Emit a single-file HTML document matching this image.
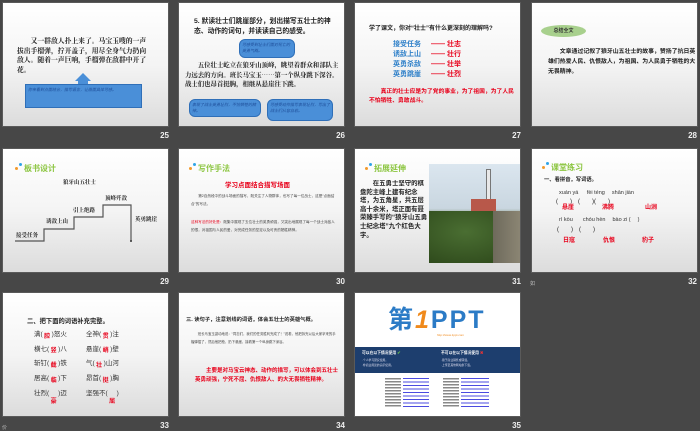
<!DOCTYPE html>
<html><head><meta charset="utf-8"><style>
*{margin:0;padding:0;box-sizing:border-box}
body{width:700px;height:431px;background:#474747;position:relative;overflow:hidden;font-family:"Liberation Sans","Noto Sans CJK SC",sans-serif}
.s{position:absolute;width:167px;height:125px;background:linear-gradient(#fff 0%,#f4f4f4 50%,#dcdcdc 100%);overflow:hidden;border:1px solid #5a5a5a}
.n{position:absolute;color:#eee;font-size:8px;font-weight:bold;text-align:right;width:30px}
.a{position:absolute;white-space:nowrap}
.w{white-space:normal}
.t{font-family:"Noto Serif CJK SC",serif;font-weight:bold;color:#222}
.b{position:absolute;background:#4a8fd8;border:1px solid #2f6fb8;border-radius:4px;color:#1f4f9a;font-size:4px;font-style:italic;padding:2px}
.r{color:#e8001a;font-weight:bold}
.h{color:#8bc53f;font-size:8px;font-weight:bold}
.dot{display:inline-block;width:3px;height:3px;border-radius:50%;background:#f39a2b;margin-right:1px;vertical-align:middle}
.dot2{display:inline-block;width:3px;height:3px;border-radius:50%;background:#2fa4e7;margin-right:2px;vertical-align:top}
.rc{display:inline-block;width:9px;text-align:center;color:#e8001a;font-weight:bold;font-size:6px;position:relative;top:1.5px}
.rl{display:inline-block;width:9px;text-align:center;color:#e8001a;font-weight:bold;font-size:6px;position:relative;top:8px}
</style></head><body>

<!-- 25 -->
<div class="s" style="left:2px;top:2px">
 <div class="a t w" style="left:14px;top:33px;font-size:6.8px;line-height:9.6px;width:132px">&emsp;&emsp;又一群敌人扑上来了。马宝玉嗖的一声拔出手榴弹，拧开盖子，用尽全身气力扔向敌人。随着一声巨响，手榴弹在敌群中开了花。</div>
 <div class="a" style="left:72px;top:70px;width:0;height:0;border-left:8px solid transparent;border-right:8px solid transparent;border-bottom:8px solid #4a8fd8"></div>
 <div class="a" style="left:75px;top:77px;width:10px;height:4px;background:#4a8fd8"></div>
 <div class="b" style="left:22px;top:81px;width:117px;height:24px;border-radius:0">你来看到点面结合，描写语言，让画面具体可感。</div>
</div>
<div class="n" style="left:139px;top:131px">25</div>

<!-- 26 -->
<div class="s" style="left:178px;top:2px">
 <div class="a t w" style="left:15px;top:14px;font-size:6.8px;line-height:10px;width:145px;font-family:'Liberation Sans','Noto Sans CJK SC',sans-serif">5. 默读壮士们跳崖部分，划出描写五壮士的神态、动作的词句，并读读自己的感受。</div>
 <div class="b" style="left:60px;top:36px;width:56px;height:19px;border-radius:6px">可感受到壮士们面对死亡的英勇气概。</div>
 <div class="a t w" style="left:6px;top:57px;font-size:6.4px;line-height:9.5px;width:158px">&emsp;&emsp;五位壮士屹立在狼牙山顶峰，眺望着群众和部队主力远去的方向。班长马宝玉……第一个纵身跳下深谷。战士们也昂首挺胸，相继从悬崖往下跳。</div>
 <div class="b" style="left:10px;top:96px;width:72px;height:18px;border-radius:6px">表现了战士英勇壮烈，不怕牺牲的精神。</div>
 <div class="b" style="left:88px;top:96px;width:66px;height:22px;border-radius:6px">可感受动作描写表现壮烈，写出了战士们从容自若。</div>
</div>
<div class="n" style="left:315px;top:131px">26</div>

<!-- 27 -->
<div class="s" style="left:354px;top:2px">
 <div class="a w" style="left:14px;top:22px;font-size:6px;line-height:8px;font-weight:bold;color:#222;width:150px">学了课文，你对“壮士”有什么更深刻的理解吗?</div>
 <div class="a" style="left:38px;top:37px;font-size:7px;line-height:10px;color:#2f80c9;font-weight:bold">接受任务<br>诱敌上山<br>英勇杀敌<br>英勇跳崖</div>
 <div class="a" style="left:76px;top:37px;font-size:7px;line-height:10px;color:#e8001a;font-weight:bold">—— 壮志<br>—— 壮行<br>—— 壮举<br>—— 壮烈</div>
 <div class="a r w" style="left:14px;top:85px;font-size:5.8px;line-height:9px;width:150px">&emsp;&emsp;真正的壮士应是为了党的事业，为了祖国，为了人民不怕牺牲、勇敢战斗。</div>
</div>
<div class="n" style="left:491px;top:131px">27</div>

<!-- 28 -->
<div class="s" style="left:531px;top:2px">
 <div class="a" style="left:9px;top:22px;width:45px;height:12px;border-radius:50%;background:#a8d08d;font-size:5px;font-weight:bold;color:#333;text-align:center;line-height:12px">总结全文</div>
 <div class="a w" style="left:16px;top:44px;font-size:5.9px;line-height:10px;color:#222;font-weight:bold;width:148px">&emsp;&emsp;文章通过记叙了狼牙山五壮士的故事，赞扬了抗日英雄们热爱人民、仇恨敌人，为祖国、为人民勇于牺牲的大无畏精神。</div>
</div>
<div class="n" style="left:667px;top:131px">28</div>

<!-- 29 -->
<div class="s" style="left:2px;top:148px">
 <div class="a h" style="left:12px;top:14px"><span class="dot"></span><span class="dot2"></span>板书设计</div>
 <div class="a t" style="left:60px;top:29px;font-size:5.5px">狼牙山五壮士</div>
 <div class="a t" style="left:102px;top:45px;font-size:5.5px">顶峰歼敌</div>
 <div class="a t" style="left:70px;top:57px;font-size:5.5px">引上绝路</div>
 <div class="a t" style="left:43px;top:68px;font-size:5.5px">诱敌上山</div>
 <div class="a t" style="left:13px;top:82px;font-size:5.5px">接受任务</div>
 <div class="a t" style="left:132px;top:66px;font-size:5.5px">英勇跳崖</div>
 <svg class="a" style="left:0;top:0" width="167" height="125"><polyline points="12,92 41,92 41,80 71,80 71,68 100,68 100,56 128,56 128,92" fill="none" stroke="#555" stroke-width="1.2"/><circle cx="128" cy="92" r="1" fill="#333"/></svg>
</div>
<div class="n" style="left:139px;top:277px">29</div>

<!-- 30 -->
<div class="s" style="left:178px;top:148px">
 <div class="a h" style="left:10px;top:14px"><span class="dot"></span><span class="dot2"></span>写作手法</div>
 <div class="a r" style="left:46px;top:30px;font-size:6.5px">学习点面结合描写场面</div>
 <div class="a w" style="left:12px;top:44px;font-size:3.6px;line-height:7.5px;color:#444;width:145px">&emsp;&emsp;第2自然段中的战斗场面的描写，既关注了人物群体，也写了每一位战士，这是“点面结合”的写法。</div>
 <div class="a w" style="left:12px;top:70px;font-size:3.6px;line-height:7.5px;color:#444;width:145px"><span style="color:#e8001a">这种写法的好处是：</span>既集中展现了五位壮士的英勇顽强，又突出地展现了每一个战士对敌人的恨，对祖国与人民的爱，对完成任务的坚定以及可贵的牺牲精神。</div>
</div>
<div class="n" style="left:315px;top:277px">30</div>

<!-- 31 -->
<div class="s" style="left:354px;top:148px">
 <div class="a h" style="left:10px;top:14px"><span class="dot"></span><span class="dot2"></span>拓展延伸</div>
 <div class="a w" style="left:5px;top:31px;font-size:6.4px;line-height:8.6px;color:#222;font-weight:bold;width:68px;overflow:hidden">&emsp;&emsp;在五勇士坚守的棋盘陀主峰上建有纪念塔，为五角星，共五层高十余米，塔正面有聂荣臻手写的“狼牙山五勇士纪念塔”九个红色大字。</div>
 <div class="a" style="left:74px;top:15px;width:92px;height:99px;background:linear-gradient(#dbe6ef 0%,#c9d6e0 45%,#6f7e58 55%,#3e5a2a 75%,#2d4620 100%)"></div>
 <div class="a" style="left:131px;top:20px;width:5px;height:45px;background:#e8e8e8;border:1px solid #777"></div>
 <div class="a" style="left:116px;top:50px;width:25px;height:12px;background:#b8584a"></div>
 <div class="a" style="left:74px;top:62px;width:92px;height:52px;background:radial-gradient(ellipse at 40% 40%,#4a6e32,#2a4418)"></div>
 <div class="a" style="left:138px;top:62px;width:28px;height:52px;background:linear-gradient(90deg,#6e6a5c,#8c8674)"></div>
</div>
<div class="n" style="left:491px;top:277px">31</div>

<!-- 32 -->
<div class="s" style="left:531px;top:148px">
 <div class="a h" style="left:10px;top:13px"><span class="dot"></span><span class="dot2"></span>课堂练习</div>
 <div class="a" style="left:12px;top:26px;font-size:5.3px;font-weight:bold;color:#222">一、看拼音，写词语。</div>
 <div class="a" style="left:27px;top:41px;font-size:5.5px;color:#333">xuán yá&emsp;&nbsp; fèi téng&emsp; shān jiàn</div>
 <div class="a" style="left:24px;top:50px;font-size:6px;color:#222">(&emsp;&emsp;)&emsp;(&emsp;&emsp;)(&emsp;&emsp;)</div>
 <div class="a r" style="left:30px;top:53px;font-size:6px">悬崖</div>
 <div class="a r" style="left:70px;top:53px;font-size:6px">沸腾</div>
 <div class="a r" style="left:113px;top:53px;font-size:6px">山涧</div>
 <div class="a" style="left:27px;top:68px;font-size:5.5px;color:#333">rì kòu&emsp;&nbsp;&nbsp; chóu hèn&emsp; bào zi (&emsp; )</div>
 <div class="a" style="left:25px;top:78px;font-size:6px;color:#222">(&emsp;&emsp;)&emsp;(&emsp;&emsp;)</div>
 <div class="a r" style="left:31px;top:86px;font-size:6px">日寇</div>
 <div class="a r" style="left:71px;top:86px;font-size:6px">仇恨</div>
 <div class="a r" style="left:110px;top:86px;font-size:6px">豹子</div>
</div>
<div class="a" style="left:530px;top:280px;font-size:5px;color:#bbb">如</div>
<div class="n" style="left:667px;top:277px">32</div>

<!-- 33 -->
<div class="s" style="left:2px;top:292px">
 <div class="a" style="left:24px;top:23px;font-size:6.3px;font-weight:bold;color:#222">二、把下面的词语补充完整。</div>
 <div class="a" style="left:31px;top:35px;font-size:6.5px;line-height:13.7px;color:#333">满(<span class="rc">腔</span>)怒火<br>横七(<span class="rc">竖</span>)八<br>斩钉(<span class="rc">截</span>)铁<br>居高(<span class="rc">临</span>)下<br>壮烈(<span class="rl">豪</span>)迈</div>
 <div class="a" style="left:83px;top:35px;font-size:6.5px;line-height:13.7px;color:#333">全神(<span class="rc">贯</span>)注<br>悬崖(<span class="rc">峭</span>)壁<br>气(<span class="rc">壮</span>)山河<br>昂首(<span class="rc">挺</span>)胸<br>坚强不(<span class="rl">屈</span>)</div>
</div>
<div class="a" style="left:2px;top:424px;font-size:5px;color:#bbb">价</div>
<div class="n" style="left:139px;top:421px">33</div>

<!-- 34 -->
<div class="s" style="left:178px;top:292px">
 <div class="a" style="left:7px;top:22px;font-size:5.3px;font-weight:bold;color:#222">三. 读句子，注意划线的词语，体会五壮士的英雄气概。</div>
 <div class="a w" style="left:12px;top:38px;font-size:3.4px;line-height:7.5px;color:#444;width:148px">&emsp;&emsp;班长马宝玉激动地说：“同志们，我们的任务胜利完成了！”说着，他把拆完以后大家拿来的手榴弹插了，然后他把枪，扔下悬崖，接着第一个纵身跳下深谷。</div>
 <div class="a r w" style="left:16px;top:74px;font-size:5.5px;line-height:8.5px;width:145px">&emsp;&emsp;主要是对马宝云神态、动作的描写，可以体会到五壮士英勇顽强，宁死不屈、仇恨敌人、的大无畏牺牲精神。</div>
</div>
<div class="n" style="left:315px;top:421px">34</div>

<!-- 35 -->
<div class="s" style="left:354px;top:292px;background:#fff">
 <div class="a" style="left:33px;top:12px;font-size:25px;line-height:30px;font-weight:bold;color:#2b7bc6;letter-spacing:2px">第<span style="color:#f08a1c;font-style:italic">1</span>PPT</div>
 <div class="a" style="left:82px;top:40px;font-size:3px;color:#f08a1c">http://www.1ppt.com</div>
 <div class="a" style="left:0;top:54px;width:167px;height:26px;background:#1d3e6e"></div>
 <div class="a" style="left:7px;top:57px;font-size:3.8px;color:#fff;font-weight:bold">可以在以下情况使用 <span style="color:#6fd04a">✔</span></div>
 <div class="a" style="left:86px;top:57px;font-size:3.8px;color:#fff;font-weight:bold">不可以在以下情况使用 <span style="color:#e33">✖</span></div>
 <div class="a" style="left:7px;top:65px;font-size:2.8px;line-height:5px;color:#dde">·个人学习研究使用。<br>·非商业用途的演示使用。</div>
 <div class="a" style="left:86px;top:65px;font-size:2.8px;line-height:5px;color:#dde">·用于商业销售或转载。<br>·上传至其他网站供下载。</div>
 <div class="a" style="left:30px;top:85px;width:16px;height:30px;background:repeating-linear-gradient(#888 0 1.5px,#fff 1.5px 3px)"></div>
 <div class="a" style="left:48px;top:85px;width:26px;height:30px;background:repeating-linear-gradient(#4b4be0 0 1px,#fff 1px 3.5px)"></div>
 <div class="a" style="left:88px;top:85px;width:16px;height:30px;background:repeating-linear-gradient(#888 0 1.5px,#fff 1.5px 3px)"></div>
 <div class="a" style="left:106px;top:85px;width:28px;height:30px;background:repeating-linear-gradient(#4b4be0 0 1px,#fff 1px 3.5px)"></div>
</div>
<div class="n" style="left:491px;top:421px">35</div>

</body></html>
